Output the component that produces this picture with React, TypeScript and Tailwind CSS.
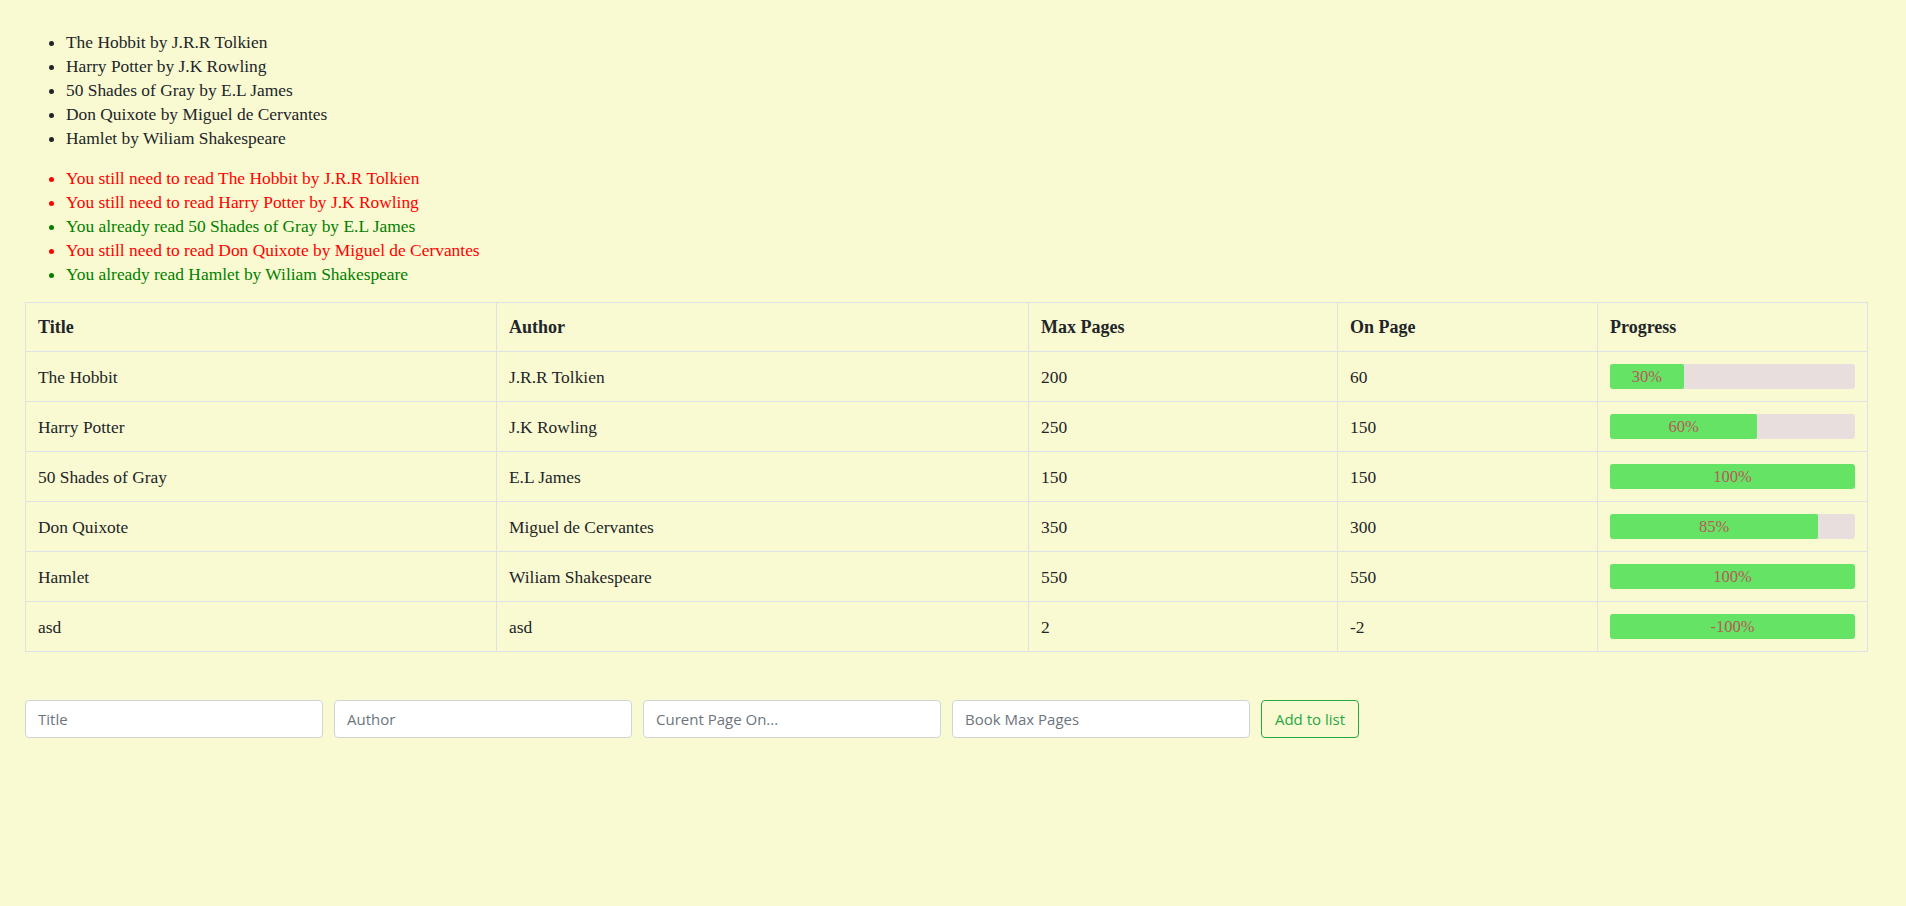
import React from "react";

const books = [
  { title: "The Hobbit", author: "J.R.R Tolkien", max: 200, on: 60, pct: 30 },
  { title: "Harry Potter", author: "J.K Rowling", max: 250, on: 150, pct: 60 },
  { title: "50 Shades of Gray", author: "E.L James", max: 150, on: 150, pct: 100 },
  { title: "Don Quixote", author: "Miguel de Cervantes", max: 350, on: 300, pct: 85 },
  { title: "Hamlet", author: "Wiliam Shakespeare", max: 550, on: 550, pct: 100 },
  { title: "asd", author: "asd", max: 2, on: -2, pct: -100 },
];

export default function App() {
  return (
    <div className="min-h-[906px] bg-[#fafad2] pl-[25px] pr-[38px] pt-[30px] font-['Liberation_Serif',serif] text-[17.4px] leading-[24px] text-[#212529]">
      <ul className="mb-4 list-disc pl-[41px]">
        {books.slice(0, 5).map((b) => (
          <li key={b.title}>
            {b.title} by {b.author}
          </li>
        ))}
      </ul>
      <ul className="mb-4 list-disc pl-[41px]">
        {books.slice(0, 5).map((b) =>
          b.on >= b.max ? (
            <li key={b.title} className="text-[#008000]">
              You already read {b.title} by {b.author}
            </li>
          ) : (
            <li key={b.title} className="text-[#ff0000]">
              You still need to read {b.title} by {b.author}
            </li>
          )
        )}
      </ul>
      <table className="w-full table-fixed border-collapse">
        <thead>
          <tr>
            <th className="h-[49px] w-[471px] border border-[#dee2e6] px-3 py-0 text-left text-[18px] font-bold">Title</th>
            <th className="h-[49px] w-[532px] border border-[#dee2e6] px-3 py-0 text-left text-[18px] font-bold">Author</th>
            <th className="h-[49px] w-[309px] border border-[#dee2e6] px-3 py-0 text-left text-[18px] font-bold">Max Pages</th>
            <th className="h-[49px] w-[260px] border border-[#dee2e6] px-3 py-0 text-left text-[18px] font-bold">On Page</th>
            <th className="h-[49px] border border-[#dee2e6] px-3 py-0 text-left text-[18px] font-bold">Progress</th>
          </tr>
        </thead>
        <tbody>
          {books.map((b) => {
            const w = Math.max(0, Math.min(100, b.pct < 0 ? 100 : b.pct));
            return (
              <tr key={b.title + b.max}>
                <td className="h-[50px] border border-[#dee2e6] px-3 py-0">{b.title}</td>
                <td className="h-[50px] border border-[#dee2e6] px-3 py-0">{b.author}</td>
                <td className="h-[50px] border border-[#dee2e6] px-3 py-0">{b.max}</td>
                <td className="h-[50px] border border-[#dee2e6] px-3 py-0">{b.on}</td>
                <td className="h-[50px] border border-[#dee2e6] px-3 py-0">
                  <div className="flex h-[25px] overflow-hidden rounded-[3px] bg-[#e8dede]">
                    <div
                      className="flex items-center justify-center rounded-r-[2px] bg-[#65e365] text-[16.5px] text-[#b85a5a]"
                      style={{ width: `${w}%` }}
                    >
                      {b.pct}%
                    </div>
                  </div>
                </td>
              </tr>
            );
          })}
        </tbody>
      </table>
      <div className="mt-[48px] flex items-center gap-[11px] font-['Open_Sans',sans-serif] text-[15px]">
        {["Title", "Author", "Curent Page On...", "Book Max Pages"].map((p) => (
          <input
            key={p}
            placeholder={p}
            className="h-[38px] w-[298px] rounded-[4px] border border-[#ced4da] bg-white px-3 text-[#495057] placeholder:text-[#6c757d] outline-none"
          />
        ))}
        <button className="h-[38px] w-[98px] rounded-[4px] border border-[#28a745] bg-transparent text-[#28a745]">
          Add to list
        </button>
      </div>
    </div>
  );
}
